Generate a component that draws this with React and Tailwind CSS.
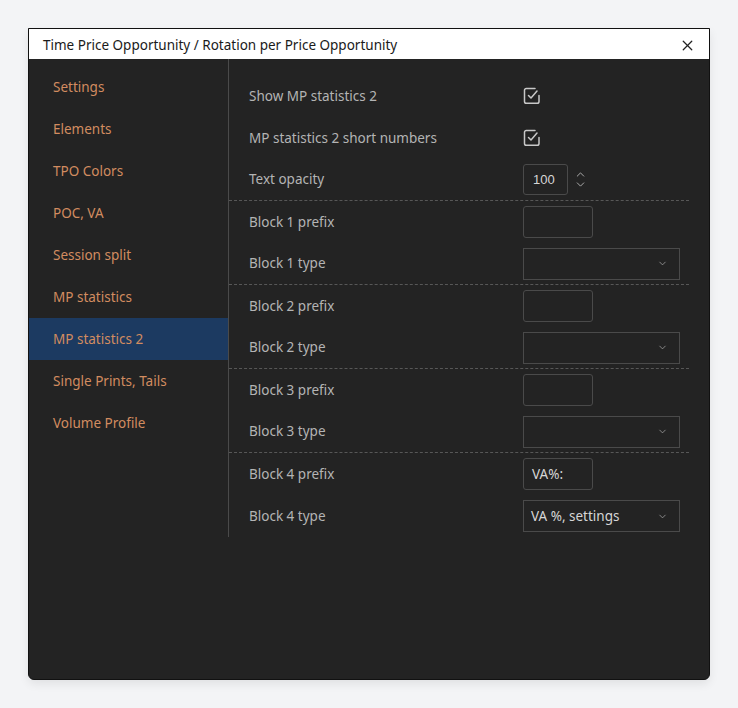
import { X, ChevronDown, ChevronUp } from 'lucide-react';

const menu = [
  'Settings',
  'Elements',
  'TPO Colors',
  'POC, VA',
  'Session split',
  'MP statistics',
  'MP statistics 2',
  'Single Prints, Tails',
  'Volume Profile',
];

// groupes separes par une ligne pointillee
const groupes = [
  [
    { label: 'Show MP statistics 2', type: 'check' },
    { label: 'MP statistics 2 short numbers', type: 'check' },
    { label: 'Text opacity', type: 'number', value: '100' },
  ],
  [
    { label: 'Block 1 prefix', type: 'text', value: '' },
    { label: 'Block 1 type', type: 'select', value: '' },
  ],
  [
    { label: 'Block 2 prefix', type: 'text', value: '' },
    { label: 'Block 2 type', type: 'select', value: '' },
  ],
  [
    { label: 'Block 3 prefix', type: 'text', value: '' },
    { label: 'Block 3 type', type: 'select', value: '' },
  ],
  [
    { label: 'Block 4 prefix', type: 'text', value: 'VA%:' },
    { label: 'Block 4 type', type: 'select', value: 'VA %, settings' },
  ],
];

function CaseCochee() {
  return (
    <svg width="18" height="18" viewBox="0 0 18 18" fill="none" className="text-[#c8c8c8]">
      <path
        d="M16 8.5V14.5a1.8 1.8 0 0 1-1.8 1.8H3.3a1.8 1.8 0 0 1-1.8-1.8V3.3a1.8 1.8 0 0 1 1.8-1.8H12"
        stroke="currentColor"
        strokeWidth="1.5"
        strokeLinecap="round"
      />
      <path d="M5.5 8.5 8 11l6-7" stroke="currentColor" strokeWidth="1.5" strokeLinecap="round" strokeLinejoin="round" />
    </svg>
  );
}

function Controle({ item }) {
  if (item.type === 'check') {
    return <CaseCochee />;
  }
  if (item.type === 'number') {
    return (
      <div className="flex items-center gap-[6px]">
        <div className="w-[45px] h-[31px] border border-[#4a4a4a] rounded-[3px] flex items-center pl-[9px] text-[#d6d6d6] text-[13px] font-['Liberation_Sans',sans-serif]">
          {item.value}
        </div>
        <div className="flex flex-col text-[#bdbdbd] -space-y-[3px]">
          <ChevronUp size={13} strokeWidth={1.6} />
          <ChevronDown size={13} strokeWidth={1.6} />
        </div>
      </div>
    );
  }
  if (item.type === 'text') {
    return (
      <div className="w-[70px] h-[32px] border border-[#4a4a4a] rounded-[3px] flex items-center pl-[8px] text-[#d6d6d6] text-[13.5px]">
        {item.value}
      </div>
    );
  }
  return (
    <div className="w-[157px] h-[32px] border border-[#4a4a4a] flex items-center justify-between pl-[7px] pr-[11px] text-[#d6d6d6] text-[13.5px]">
      <span>{item.value}</span>
      <ChevronDown size={11} strokeWidth={1.6} className="text-[#aaaaaa]" />
    </div>
  );
}

export default function App() {
  return (
    <div className="min-h-[708px] bg-[#f3f4f6] pt-[28px] pl-[28px] font-['Noto_Sans',sans-serif]">
      <div className="w-[682px] h-[652px] bg-[#232323] border border-[#111] rounded-b-[6px] shadow-[0_4px_10px_rgba(0,0,0,0.08)] flex flex-col overflow-hidden">
        <div className="h-[30px] bg-white flex items-center justify-between pt-[2px] pl-[14px] pr-[13px] shrink-0">
          <span className="text-[13.5px] text-[#1a1a1a]">
            Time Price Opportunity / Rotation per Price Opportunity
          </span>
          <X size={17} strokeWidth={1.8} className="text-[#222]" />
        </div>
        <div className="flex items-stretch">
          <div className="w-[200px] shrink-0 border-r border-[#4a4a4a] pt-[7px]">
            {menu.map((nom) => (
              <div
                key={nom}
                className={`h-[42px] flex items-center pl-[24px] text-[13.5px] text-[#d28c60] ${
                  nom === 'MP statistics 2' ? 'bg-[#1c3a61]' : ''
                }`}
              >
                {nom}
              </div>
            ))}
          </div>
          <div className="w-[460px] pt-[16px]">
            {groupes.map((groupe, gi) => {
              const borde = gi < groupes.length - 1;
              return (
                <div key={gi} className={borde ? 'border-b border-dashed border-[#575757]' : ''}>
                  {groupe.map((item, ii) => (
                    <div
                      key={item.label}
                      className={`flex items-center pl-[20px] ${
                        borde && ii === groupe.length - 1 ? 'h-[41px]' : 'h-[42px]'
                      }`}
                    >
                      <span className="w-[274px] text-[13.5px] text-[#b4b4b4]">{item.label}</span>
                      <Controle item={item} />
                    </div>
                  ))}
                </div>
              );
            })}
          </div>
        </div>
      </div>
    </div>
  );
}
